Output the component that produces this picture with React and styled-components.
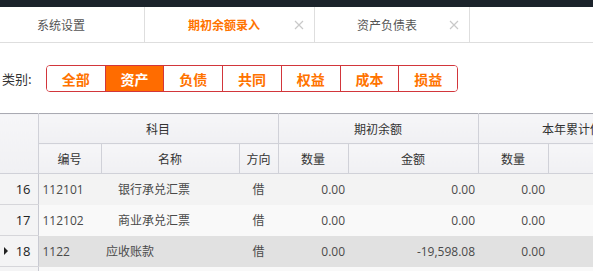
import React from "react";
import styled, { createGlobalStyle } from "styled-components";

const GlobalStyle = createGlobalStyle`
  html, body {
    margin: 0;
    padding: 0;
    background: #ffffff;
    overflow: hidden;
  }
  body {
    width: 593px;
    height: 271px;
    font-family: "Open Sans", "Noto Sans CJK SC", sans-serif;
  }
`;

const Page = styled.div`
  width: 593px;
  height: 271px;
  overflow: hidden;
  display: flex;
  flex-direction: column;
`;

const TopBar = styled.div`
  height: 7px;
  background: #1b232b;
  flex-shrink: 0;
`;

const TabBar = styled.div`
  height: 35px;
  display: flex;
  border-bottom: 1px solid #dedede;
  flex-shrink: 0;
`;

const Tab = styled.div`
  width: ${props => props.w}px;
  box-sizing: border-box;
  display: flex;
  align-items: center;
  padding-left: ${props => props.pad}px;
  padding-right: 10px;
  border-right: 1px solid #dedede;
  font-family: "Noto Sans CJK SC", sans-serif;
  font-size: 12px;
  font-weight: ${props => props.active ? 700 : 400};
  color: ${props => props.active ? '#ff7300' : '#555555'};
`;

const TabClose = styled.span`
  margin-left: auto;
  display: flex;
  width: 10px;
  height: 10px;
`;

const FilterRow = styled.div`
  display: flex;
  align-items: center;
  margin-top: 22px;
  height: 27px;
  padding-left: 2px;
  flex-shrink: 0;
`;

const FilterLabel = styled.span`
  font-family: "Noto Sans CJK SC", sans-serif;
  font-size: 13px;
  color: #333333;
  width: 44px;
`;

const ButtonGroup = styled.div`
  display: flex;
  width: 412px;
  height: 27px;
  box-sizing: border-box;
  border: 1px solid #d2363b;
  border-radius: 4px;
  overflow: hidden;
`;

const CatButton = styled.div`
  flex: 1;
  display: flex;
  align-items: center;
  justify-content: center;
  border-left: ${props => props.first ? 'none' : '1px solid #d2363b'};
  background: ${props => props.active ? '#ff6c00' : '#ffffff'};
  color: ${props => props.active ? '#ffffff' : '#ff7300'};
  font-family: "Noto Sans CJK SC", sans-serif;
  font-size: 14px;
  font-weight: 700;
`;

const TableWrap = styled.div`
  margin-top: 21px;
  overflow: hidden;
  flex: 1;
`;

const Grid = styled.table`
  table-layout: fixed;
  border-collapse: collapse;
  width: ${props => props.w}px;
  border-top: 1px solid #a9aab2;
`;

const HeadCell = styled.th`
  height: 29px;
  padding: 0;
  background: linear-gradient(#f6f6f8, #f0f0f3);
  border-right: 1px solid #d0d1d8;
  border-bottom: 1px solid #d0d1d8;
  font-family: "Noto Sans CJK SC", sans-serif;
  font-size: 12px;
  font-weight: 400;
  color: #333333;
  text-align: center;
  white-space: nowrap;
  overflow: hidden;
`;

const Row = styled.tr`
  height: 31px;
  background: ${props => props.selected ? '#e1e1e1' : props.odd ? '#f9f9f9' : '#f3f3f3'};
`;

const NumCell = styled.td`
  padding: 0 7px 0 4px;
  background: #f4f4f5;
  border-right: 1px solid #c9cad2;
  border-bottom: 1px solid #d6d6da;
  font-size: 13px;
  color: #222222;
`;

const NumInner = styled.div`
  display: flex;
  align-items: center;
  justify-content: space-between;
`;

const Pointer = styled.span`
  width: 0;
  height: 0;
  border-top: 4px solid transparent;
  border-bottom: 4px solid transparent;
  border-left: 4px solid ${props => props.show ? '#222222' : 'transparent'};
`;

const Cell = styled.td`
  padding: 0 ${props => props.align === 'right' ? '3px' : '0'} 0 ${props => props.indent || 0}px;
  text-align: ${props => props.align || 'left'};
  font-family: "Open Sans", "Noto Sans CJK SC", sans-serif;
  font-size: 12px;
  color: #4a4a4a;
  white-space: nowrap;
  overflow: hidden;
`;

function CloseIcon() {
  return (
    <svg width="10" height="10" viewBox="0 0 10 10">
      <path d="M1 1L9 9M9 1L1 9" stroke="#c9c9c9" strokeWidth="1.2" fill="none" />
    </svg>
  );
}

const tabs = [
  { label: "系统设置", w: 145, pad: 37, close: false },
  { label: "期初余额录入", w: 170, pad: 43, close: true, active: true },
  { label: "资产负债表", w: 155, pad: 42, close: true },
];

const categories = ["全部", "资产", "负债", "共同", "权益", "成本", "损益"];

const colWidths = [38, 63, 138, 39, 70, 130, 70, 130, 70, 130];
const tableWidth = colWidths.reduce((a, b) => a + b, 0);

const rows = [
  { n: 16, code: "112101", name: "银行承兑汇票", level: 2, dir: "借", qty: "0.00", amt: "0.00", yq: "0.00" },
  { n: 17, code: "112102", name: "商业承兑汇票", level: 2, dir: "借", qty: "0.00", amt: "0.00", yq: "0.00", odd: true },
  { n: 18, code: "1122", name: "应收账款", level: 1, dir: "借", qty: "0.00", amt: "-19,598.08", yq: "0.00", selected: true },
  { n: 19, code: "1123", name: "预付账款", level: 1, dir: "借", qty: "0.00", amt: "0.00", yq: "0.00", odd: true },
];

export default function App() {
  return (
    <Page>
      <GlobalStyle />
      <TopBar />
      <TabBar>
        {tabs.map(t => (
          <Tab key={t.label} w={t.w} pad={t.pad} active={t.active}>
            <span>{t.label}</span>
            {t.close && <TabClose><CloseIcon /></TabClose>}
          </Tab>
        ))}
      </TabBar>
      <FilterRow>
        <FilterLabel>类别:</FilterLabel>
        <ButtonGroup>
          {categories.map((c, i) => (
            <CatButton key={c} first={i === 0} active={c === "资产"}>{c}</CatButton>
          ))}
        </ButtonGroup>
      </FilterRow>
      <TableWrap>
        <Grid w={tableWidth}>
          <colgroup>
            {colWidths.map((w, i) => <col key={i} style={{ width: w }} />)}
          </colgroup>
          <thead>
            <tr>
              <HeadCell rowSpan={2} />
              <HeadCell colSpan={3}>科目</HeadCell>
              <HeadCell colSpan={2}>期初余额</HeadCell>
              <HeadCell colSpan={2}>本年累计借方</HeadCell>
              <HeadCell colSpan={2}>本年累计贷方</HeadCell>
            </tr>
            <tr>
              <HeadCell>编号</HeadCell>
              <HeadCell>名称</HeadCell>
              <HeadCell>方向</HeadCell>
              <HeadCell>数量</HeadCell>
              <HeadCell>金额</HeadCell>
              <HeadCell>数量</HeadCell>
              <HeadCell>金额</HeadCell>
              <HeadCell>数量</HeadCell>
              <HeadCell>金额</HeadCell>
            </tr>
          </thead>
          <tbody>
            {rows.map(r => (
              <Row key={r.n} odd={r.odd} selected={r.selected}>
                <NumCell>
                  <NumInner>
                    <Pointer show={r.selected} />
                    <span>{r.n}</span>
                  </NumInner>
                </NumCell>
                <Cell indent={4}>{r.code}</Cell>
                <Cell indent={r.level === 2 ? 17 : 5}>{r.name}</Cell>
                <Cell align="center">{r.dir}</Cell>
                <Cell align="right">{r.qty}</Cell>
                <Cell align="right">{r.amt}</Cell>
                <Cell align="right">{r.yq}</Cell>
                <Cell align="right">0.00</Cell>
                <Cell align="right">0.00</Cell>
                <Cell align="right">0.00</Cell>
              </Row>
            ))}
          </tbody>
        </Grid>
      </TableWrap>
    </Page>
  );
}
